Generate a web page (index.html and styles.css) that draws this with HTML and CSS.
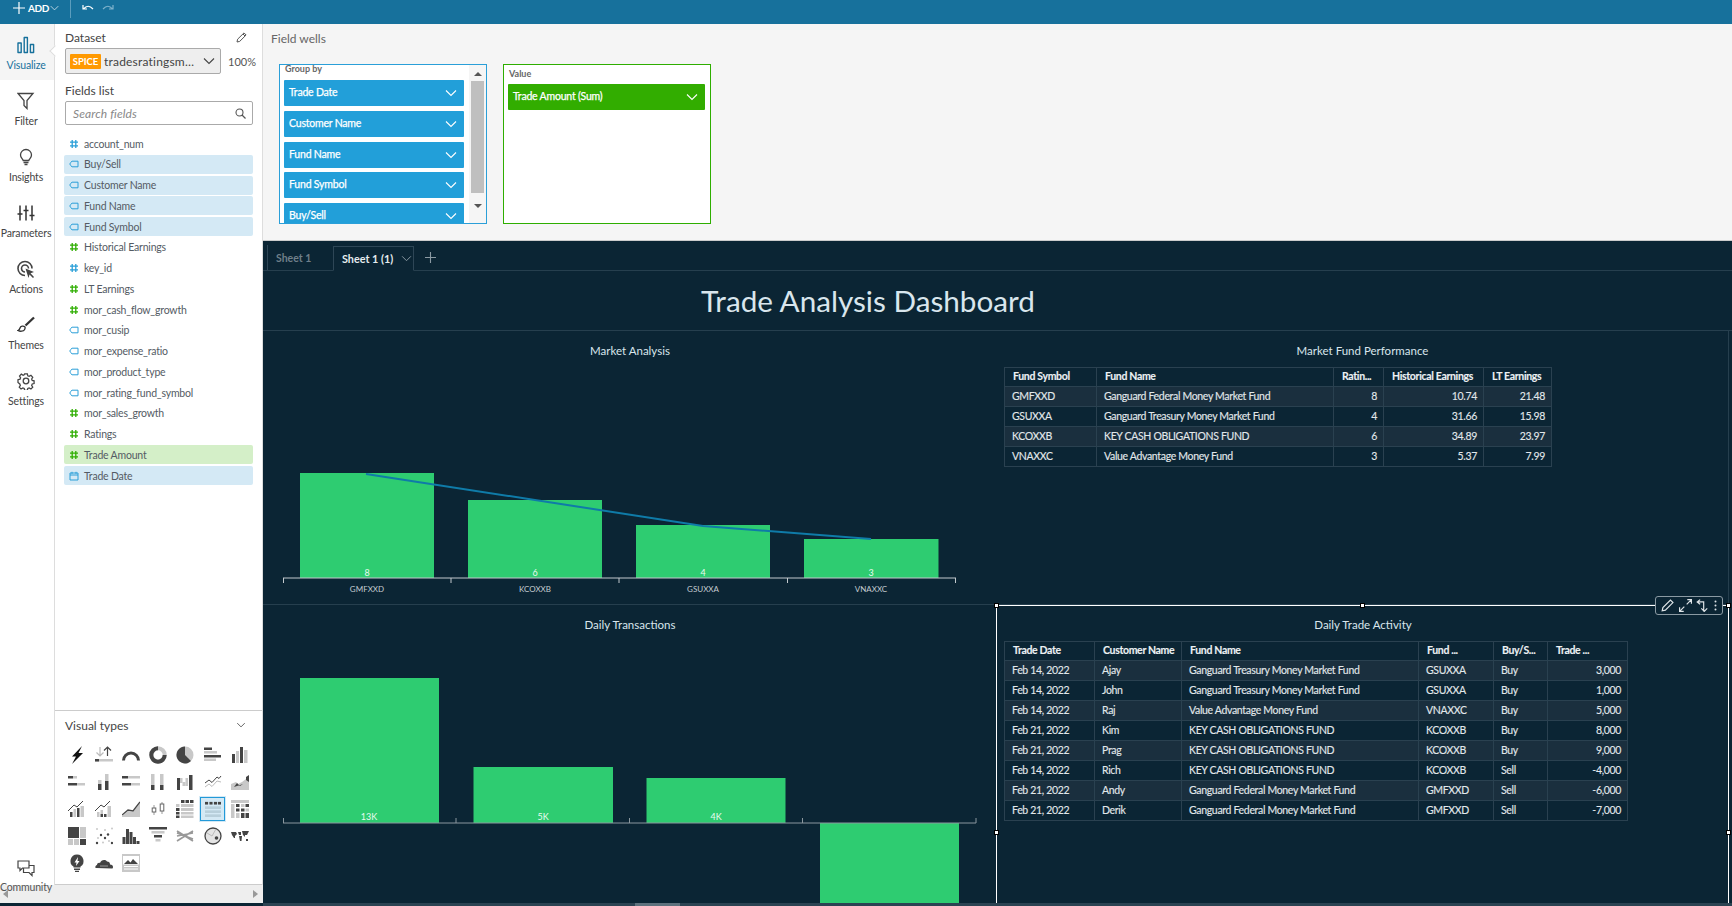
FILE: index.html
```html
<!DOCTYPE html>
<html lang="en">
<head>
<meta charset="utf-8">
<title>Trade Analysis Dashboard</title>
<link rel="stylesheet" href="styles.css">
</head>
<body>
<svg class="defs" width="0" height="0" aria-hidden="true">
  <symbol id="chev" viewBox="0 0 12 8"><path d="M1 1.5 6 6.5 11 1.5" fill="none" stroke="currentColor" stroke-width="1.1"/></symbol>
  <symbol id="hash" viewBox="0 0 10 10"><path d="M3.2 1v8M6.8 1v8M1 3.2h8M1 6.8h8" fill="none" stroke="currentColor" stroke-width="1.3"/></symbol>
  <symbol id="tag" viewBox="0 0 10 10"><path d="M3 2.2h6v5.6H3Q1.6 6.8.8 5 1.6 3.2 3 2.2z" fill="none" stroke="currentColor" stroke-width="1"/></symbol>
  <symbol id="cal" viewBox="0 0 10 10"><path d="M1 2h8v7H1zM1 4h8M3 .8v2M7 .8v2" fill="none" stroke="currentColor" stroke-width="1"/></symbol>
</svg>
<div class="app">
  <header class="topbar">
    <svg class="tb-plus" width="12" height="12" viewBox="0 0 12 12"><path d="M6 0v12M0 6h12" stroke="#fff" stroke-width="1.2"/></svg>
    <span class="tb-add">ADD</span>
    <svg class="tb-chev" width="9" height="6"><use href="#chev"/></svg>
    <span class="tb-sep"></span>
    <svg class="tb-undo" width="12" height="8" viewBox="0 0 12 8"><path d="M1 1v4h4M1.5 5Q6-.5 11 5" fill="none" stroke="#fff" stroke-width="1.2"/></svg>
    <svg class="tb-redo" width="12" height="8" viewBox="0 0 12 8"><path d="M11 1v4H7M10.5 5Q6-.5 1 5" fill="none" stroke="#7fb2cb" stroke-width="1.2"/></svg>
  </header>
  <div class="workspace">
    <div class="side">
      <div class="side-upper">
        <nav class="rail">
          <div class="rail-item active">
            <svg width="18" height="17" viewBox="0 0 18 17"><path d="M1 6.5h3.2v9.5H1zM7.2 1h3.2v15H7.2zM13.4 8h3.2v8h-3.2z" fill="none" stroke="#17719c" stroke-width="1.4" stroke-linejoin="round"/></svg>
            <span>Visualize</span><i class="notch"></i>
          </div>
          <div class="rail-item">
            <svg width="18" height="17" viewBox="0 0 18 17"><path d="M1 1h15l-6 7v8l-3-3V8z" fill="none" stroke="#444" stroke-width="1.3"/></svg>
            <span>Filter</span>
          </div>
          <div class="rail-item">
            <svg width="18" height="18" viewBox="0 0 18 18"><path d="M6.2 12.5C5.5 10.6 3.5 9.8 3.5 7a5.5 5.5 0 0 1 11 0c0 2.8-2 3.6-2.7 5.5zM6.5 14.5h5M7.5 16.5h3" fill="none" stroke="#444" stroke-width="1.3"/></svg>
            <span>Insights</span>
          </div>
          <div class="rail-item">
            <svg width="18" height="17" viewBox="0 0 18 17"><path d="M3 1v15M9 1v15M15 1v15M0.5 9.5h5M6.5 6h5M12.5 11h5" fill="none" stroke="#333" stroke-width="1.5"/></svg>
            <span>Parameters</span>
          </div>
          <div class="rail-item">
            <svg width="18" height="18" viewBox="0 0 18 18"><path d="M8 15.5A7 7 0 1 1 15 8.5M8 12a3.500 3.500 0 1 1 3.500-3.500" fill="none" stroke="#444" stroke-width="1.6"/><path d="M8.500 8.500 17 12l-3.500 1.200L17 17l-1 1-3.500-3.500L11.500 18z" fill="#444"/></svg>
            <span>Actions</span>
          </div>
          <div class="rail-item">
            <svg width="18" height="17" viewBox="0 0 18 17"><path d="M17 1 8.500 9" stroke="#333" stroke-width="2.400"/><path d="M8 10.500c-1.500-1.500-4.500-1-5 1-.4 1.500-1 2.200-2 2.500 2 1.200 5.500 1 6.500-.8.600-1 .8-1.900.500-2.700z" fill="none" stroke="#333" stroke-width="1.300"/></svg>
            <span>Themes</span>
          </div>
          <div class="rail-item">
            <svg width="18" height="18" viewBox="0 0 18 18"><circle cx="9" cy="9" r="2.800" fill="none" stroke="#444" stroke-width="1.300"/><path d="M7.500 1h3l.5 2.300 1.500.6 2-1.200 2 2.100-1.200 2 .6 1.500 2.100.5v3l-2.100.5-.6 1.500 1.200 2-2 2-2-1.200-1.500.6-.5 2.300h-3l-.5-2.300-1.500-.6-2 1.200-2-2 1.200-2-.6-1.500L.1 10.500v-3l2.300-.5.600-1.500-1.200-2 2-2.100 2 1.200 1.200-.6z" transform="translate(.9 .9) scale(.9)" fill="none" stroke="#444" stroke-width="1.400"/></svg>
            <span>Settings</span>
          </div>
          <div class="rail-item community">
            <svg width="18" height="16" viewBox="0 0 18 16"><path d="M6.500 5.500H17v7h-2v3l-3-3H6.500z" fill="#fff" stroke="#444" stroke-width="1.200"/><path d="M1 1h11v7H5.500L3 10.500V8H1z" fill="#fff" stroke="#444" stroke-width="1.200"/></svg>
            <span>Community</span>
          </div>
        </nav>
        <aside class="panel">
          <div class="ds-head"><span class="ds-label">Dataset</span>
            <svg width="11" height="11" viewBox="0 0 11 11"><path d="M1 10l.6-2.800L8 .9l2.100 2.100-6.400 6.400zM7 2l2 2" fill="none" stroke="#555" stroke-width="1"/></svg>
          </div>
          <div class="ds-row">
            <div class="ds-select">
              <span class="spice">SPICE</span><span class="ds-name">tradesratingsm…</span>
              <svg class="ds-chev" width="12" height="8"><use href="#chev"/></svg>
            </div>
            <span class="ds-pct">100%</span>
          </div>
          <div class="fl-label">Fields list</div>
          <div class="search"><span>Search fields</span>
            <svg width="11" height="11" viewBox="0 0 11 11"><circle cx="4.500" cy="4.500" r="3.500" fill="none" stroke="#555" stroke-width="1.100"/><path d="M7 7l3.500 3.500" stroke="#555" stroke-width="1.300"/></svg>
          </div>
          <ul class="fields">
            <li class="field"><svg class="fi blue"><use href="#hash"/></svg>account_num</li>
            <li class="field sel-b"><svg class="fi blue"><use href="#tag"/></svg>Buy/Sell</li>
            <li class="field sel-b"><svg class="fi blue"><use href="#tag"/></svg>Customer Name</li>
            <li class="field sel-b"><svg class="fi blue"><use href="#tag"/></svg>Fund Name</li>
            <li class="field sel-b"><svg class="fi blue"><use href="#tag"/></svg>Fund Symbol</li>
            <li class="field"><svg class="fi green"><use href="#hash"/></svg>Historical Earnings</li>
            <li class="field"><svg class="fi blue"><use href="#hash"/></svg>key_id</li>
            <li class="field"><svg class="fi green"><use href="#hash"/></svg>LT Earnings</li>
            <li class="field"><svg class="fi green"><use href="#hash"/></svg>mor_cash_flow_growth</li>
            <li class="field"><svg class="fi blue"><use href="#tag"/></svg>mor_cusip</li>
            <li class="field"><svg class="fi blue"><use href="#tag"/></svg>mor_expense_ratio</li>
            <li class="field"><svg class="fi blue"><use href="#tag"/></svg>mor_product_type</li>
            <li class="field"><svg class="fi blue"><use href="#tag"/></svg>mor_rating_fund_symbol</li>
            <li class="field"><svg class="fi green"><use href="#hash"/></svg>mor_sales_growth</li>
            <li class="field"><svg class="fi green"><use href="#hash"/></svg>Ratings</li>
            <li class="field sel-g"><svg class="fi green"><use href="#hash"/></svg>Trade Amount</li>
            <li class="field sel-b"><svg class="fi blue"><use href="#cal"/></svg>Trade Date</li>
          </ul>
          <section class="vt">
            <div class="vt-head"><span>Visual types</span><svg width="10" height="6"><use href="#chev"/></svg></div>
            <div class="vt-grid">
              <div class="vi"><svg viewBox="0 0 18 18"><path d="M14 0 4 10.500h4L4 18 15 7h-4.500z" fill="#111"/></svg></div>
              <div class="vi"><svg viewBox="0 0 18 18"><path d="M5 1v9M1.500 6.500 5 10l3.500-3.500" fill="none" stroke="#bbb" stroke-width="1.200"/><path d="M12.500 10V1M9 4.500 12.500 1 16 4.500" fill="none" stroke="#444" stroke-width="1.200"/><rect class="l" y="13" width="18" height="2.500"/><rect class="d" y="13" width="4" height="2.500"/></svg></div>
              <div class="vi"><svg viewBox="0 0 18 18"><path d="M1.500 14.500a7.500 7.500 0 0 1 15 0" fill="none" stroke="#444" stroke-width="3"/></svg></div>
              <div class="vi"><svg viewBox="0 0 18 18"><circle cx="9" cy="9" r="6.700" fill="none" stroke="#c8c8c8" stroke-width="4"/><path d="M9 2.300A6.700 6.700 0 1 0 15.700 9" fill="none" stroke="#444" stroke-width="4"/></svg></div>
              <div class="vi"><svg viewBox="0 0 18 18"><circle class="l" cx="9" cy="9" r="8.500"/><path class="d" d="M9 9V.5A8.500 8.500 0 1 0 15 15z"/></svg></div>
              <div class="vi"><svg viewBox="0 0 18 18"><rect class="d" y="1.500" width="8" height="2.500"/><rect class="l" y="5" width="13" height="2.500"/><rect class="d" y="9" width="17" height="2.500"/><rect class="l" y="12.500" width="12" height="2.500"/></svg></div>
              <div class="vi"><svg viewBox="0 0 18 18"><rect class="d" x="1" y="8" width="3" height="9"/><rect class="l" x="5" y="5" width="3" height="12"/><rect class="d" x="9" y="1" width="3" height="16"/><rect class="l" x="13" y="4" width="3.500" height="13"/></svg></div>

              <div class="vi"><svg viewBox="0 0 18 18"><rect class="d" y="3" width="5" height="2.500"/><rect class="l" x="5" y="3" width="4" height="2.500"/><rect class="d" y="10" width="9" height="2.500"/><rect class="l" x="9" y="10" width="8" height="2.500"/></svg></div>
              <div class="vi"><svg viewBox="0 0 18 18"><rect class="d" x="3" y="11" width="3.500" height="6"/><rect class="l" x="3" y="7" width="3.500" height="4"/><rect class="d" x="10" y="8" width="3.500" height="9"/><rect class="l" x="10" y="1" width="3.500" height="7"/></svg></div>
              <div class="vi"><svg viewBox="0 0 18 18"><rect class="d" y="3" width="6" height="2.500"/><rect class="l" x="6" y="3" width="12" height="2.500"/><rect class="d" y="10" width="9" height="2.500"/><rect class="l" x="9" y="10" width="9" height="2.500"/></svg></div>
              <div class="vi"><svg viewBox="0 0 18 18"><rect class="l" x="2" y="1" width="3.500" height="11"/><rect class="d" x="2" y="12" width="3.500" height="5"/><rect class="l" x="11" y="1" width="3.500" height="11"/><rect class="d" x="11" y="12" width="3.500" height="5"/></svg></div>
              <div class="vi"><svg viewBox="0 0 18 18"><rect class="d" x="1" y="5" width="3" height="12"/><rect class="l" x="4" y="5" width="2.500" height="5"/><rect class="l" x="6.500" y="9" width="3" height="4"/><rect class="l" x="9.500" y="5" width="2.500" height="8"/><rect class="d" x="13" y="2" width="3.500" height="15"/></svg></div>
              <div class="vi"><svg viewBox="0 0 18 18"><path d="M1 10l4-3 3 2.500L13 4l2 1.500L17 3" fill="none" stroke="#444" stroke-width="1"/><path d="M1 14l4-3 3 2.500L13 8l4 1" fill="none" stroke="#bbb" stroke-width="1"/></svg></div>
              <div class="vi"><svg viewBox="0 0 18 18"><path class="l" d="M0 17v-6l5-2 2 2 4-2 4-3 3 2v9z"/><path class="d" d="M3 14l3-4 3 3 3-2zM15 4l3-2v7l-3-2z"/></svg></div>

              <div class="vi"><svg viewBox="0 0 18 18"><rect class="d" x="2" y="12" width="2.500" height="5"/><rect class="l" x="5.500" y="9" width="2.500" height="8"/><rect class="d" x="9" y="8" width="2.500" height="9"/><rect class="l" x="12.500" y="6" width="3.500" height="11"/><path d="M0 11l6-6 3 2 6-6" fill="none" stroke="#444" stroke-width="1"/></svg></div>
              <div class="vi"><svg viewBox="0 0 18 18"><rect class="l" x="2" y="12" width="2.500" height="5"/><rect class="d" x="5.500" y="14" width="2.500" height="3"/><rect class="l" x="5.500" y="10" width="2.500" height="4"/><rect class="d" x="9" y="14" width="2.500" height="3"/><rect class="l" x="12.500" y="6" width="3.500" height="11"/><path d="M0 11l6-6 3 2 6-6" fill="none" stroke="#444" stroke-width="1"/></svg></div>
              <div class="vi"><svg viewBox="0 0 18 18"><path class="l" d="M0 16l6-5 5 1 7-9v14H0z"/><path d="M0 15l6-5 5 1 7-9" fill="none" stroke="#444" stroke-width="1.300"/></svg></div>
              <div class="vi"><svg viewBox="0 0 18 18"><path d="M5 5v10M13 2v12" stroke="#999" stroke-width="1"/><rect x="3.200" y="8" width="3.600" height="4" fill="#fff" stroke="#666"/><rect x="11.200" y="4" width="3.600" height="7" fill="#fff" stroke="#666"/></svg></div>
              <div class="vi"><svg viewBox="0 0 18 18"><rect class="d" x="5" y="0" width="3.500" height="3"/><rect class="d" x="9.500" y="0" width="3.500" height="3"/><rect class="d" x="14" y="0" width="3.500" height="3"/><rect class="l" x="0" y="4" width="3.500" height="3"/><rect class="l" x="5" y="4" width="12.500" height="3"/><rect class="d" x="0" y="8" width="3.500" height="3"/><rect class="l" x="5" y="8" width="12.500" height="3"/><rect class="d" x="0" y="12" width="3.500" height="2.500"/><rect class="l" x="5" y="12" width="12.500" height="2.500"/><rect class="d" x="0" y="15.500" width="3.500" height="2.500"/><rect class="l" x="5" y="15.500" width="12.500" height="2.500"/></svg></div>
              <div class="vi selected"><svg viewBox="0 0 18 18"><rect class="d" x="0" y="1" width="3.500" height="3"/><rect class="d" x="5" y="1" width="3.500" height="3"/><rect class="d" x="10" y="1" width="3.500" height="3"/><rect class="d" x="14.500" y="1" width="3.500" height="3"/><rect class="m" x="0" y="6" width="18" height="3"/><rect class="m" x="0" y="10.500" width="18" height="3"/><rect class="m" x="0" y="15" width="18" height="3"/></svg></div>
              <div class="vi"><svg viewBox="0 0 18 18"><rect class="l" x="0" y="0" width="18" height="3"/><rect class="l" x="0" y="4" width="3.500" height="14"/><rect class="d" x="5" y="4" width="3.500" height="3"/><rect class="l" x="10" y="4" width="3.500" height="3"/><rect class="d" x="14.500" y="4" width="3.500" height="3"/><rect class="d" x="5" y="8.500" width="3.500" height="3"/><rect class="d" x="10" y="8.500" width="3.500" height="3"/><rect class="l" x="14.500" y="8.500" width="3.500" height="3"/><rect class="l" x="5" y="13" width="3.500" height="5"/><rect class="d" x="10" y="13" width="3.500" height="5"/><rect class="d" x="14.500" y="13" width="3.500" height="5"/></svg></div>

              <div class="vi"><svg viewBox="0 0 18 18"><rect class="d" x="0" y="0" width="11" height="11"/><rect class="l" x="12" y="0" width="6" height="11"/><rect class="l" x="0" y="12" width="5" height="6"/><rect class="l" x="6" y="12" width="5" height="6"/><rect class="d" x="12" y="12" width="6" height="6"/></svg></div>
              <div class="vi"><svg viewBox="0 0 18 18"><g class="d"><circle cx="6" cy="8" r="1.200"/><circle cx="13" cy="7.500" r="1.200"/><circle cx="10" cy="11" r="1.200"/><circle cx="2" cy="16" r="1.200"/><circle cx="17" cy="16" r="1.200"/></g><g class="l"><circle cx="2" cy="2" r="1"/><circle cx="10" cy="3" r="1"/><circle cx="17" cy="1.500" r="1"/><circle cx="3" cy="11" r="1"/><circle cx="8" cy="15.500" r="1"/><circle cx="14" cy="14" r="1"/></g></svg></div>
              <div class="vi"><svg viewBox="0 0 18 18"><rect class="d" x="0.500" y="10" width="3" height="7"/><rect class="d" x="4" y="2" width="3" height="15"/><rect class="d" x="7.500" y="5" width="3" height="12"/><rect class="d" x="11" y="10" width="3" height="7"/><rect class="d" x="14.500" y="14" width="3" height="3"/></svg></div>
              <div class="vi"><svg viewBox="0 0 18 18"><rect class="d" x="0" y="0" width="18" height="2.500"/><rect class="l" x="2.500" y="4" width="13" height="2.500"/><rect class="d" x="5" y="8" width="8" height="2.500"/><rect class="l" x="6.500" y="12" width="5" height="2.500"/></svg></div>
              <div class="vi"><svg viewBox="0 0 18 18"><path d="M1 4l16 10M1 14l16-10M1 9l16-3M1 6l16 6" fill="none" stroke="#999" stroke-width="1.700"/></svg></div>
              <div class="vi"><svg viewBox="0 0 18 18"><circle cx="9" cy="9" r="8" fill="#e4e4e4" stroke="#444" stroke-width="1.300"/><circle cx="12.500" cy="11" r="1.800" fill="#444"/><path d="M3 6l5 3 4-7" fill="none" stroke="#bbb"/></svg></div>
              <div class="vi"><svg viewBox="0 0 18 18"><path class="d" d="M0 5h5l1 2-2 2v2H3L1 8zM7 5h3v3H8zM8 9h3l-.500 5H9zM11 4h7l-2 4h-2v2l-2-2zM15 12h2v2h-2z"/></svg></div>

              <div class="vi"><svg viewBox="0 0 18 18"><path class="d" d="M9 .5a6.500 6.500 0 0 1 3.500 12v1h-7v-1A6.500 6.500 0 0 1 9 .5zM6 14.500h6V16H6zM7 16.800h4V18H7z"/><path d="M10 3 6.500 8.500h2L8 12l3.500-5h-2z" fill="#fff"/></svg></div>
              <div class="vi"><svg viewBox="0 0 18 18"><path class="d" d="M1 14c-1 0-1-2.500 1-3 0-2 2-2.500 3-2 1-3 5-4 7-1.500 2 0 3 1 3 3 2 0 3 1 3 2.500s-.500 1.500-1 1.500z"/><path d="M5 12h8" stroke="#999"/></svg></div>
              <div class="vi"><svg viewBox="0 0 18 18"><rect class="l" width="18" height="18"/><rect x="1" y="2" width="16" height="8.500" fill="#fff"/><path class="d" d="M2 10l4-4 2.500 2.500L11 5l5 5z"/><path d="M2 12.500h14M2 15h14" stroke="#fff"/></svg></div>
            </div>
          </section>
        </aside>
      </div>
      <div class="hscroll"><i class="arr-l"></i><i class="arr-r"></i></div>
    </div>
    <main class="main">
      <section class="wells">
        <div class="wells-title">Field wells</div>
        <div class="wells-row">
          <div class="well well-b">
            <div class="well-body">
              <div class="well-label">Group by</div>
              <div class="chip">Trade Date<svg width="12" height="8"><use href="#chev"/></svg></div>
              <div class="chip">Customer Name<svg width="12" height="8"><use href="#chev"/></svg></div>
              <div class="chip">Fund Name<svg width="12" height="8"><use href="#chev"/></svg></div>
              <div class="chip">Fund Symbol<svg width="12" height="8"><use href="#chev"/></svg></div>
              <div class="chip">Buy/Sell<svg width="12" height="8"><use href="#chev"/></svg></div>
            </div>
            <div class="vscroll"><i class="up"></i><b></b><i class="down"></i></div>
          </div>
          <div class="well well-g">
            <div class="well-label val">Value</div>
            <div class="chip green-chip">Trade Amount (Sum)<svg width="12" height="8"><use href="#chev"/></svg></div>
          </div>
        </div>
      </section>
      <section class="sheet">
        <div class="tabs">
          <span class="tab">Sheet 1</span>
          <span class="tab current">Sheet 1 (1)<svg width="11" height="7"><use href="#chev"/></svg></span>
          <svg class="tab-plus" width="11" height="11" viewBox="0 0 11 11"><path d="M5.500 0v11M0 5.500h11" stroke="#8b9aa3" stroke-width="1.100"/></svg>
        </div>
        <h1 class="title">Trade Analysis Dashboard</h1>
        <div class="canvas">
          <article class="visual v-tl">
            <h2>Market Analysis</h2>
            <svg class="chart" viewBox="263 367 734 237" width="734" height="237">
              <g class="bars">
                <rect x="300" y="473" width="134" height="105"/><rect x="468" y="500" width="134" height="78"/><rect x="636" y="525" width="134" height="53"/><rect x="804" y="539" width="134.500" height="39"/>
              </g>
              <path class="trend" d="M366 474 535 500 703 526 871 539"/>
              <path class="axis" d="M283 578H956M283.500 578v5M451 578v5M619 578v5M787.500 578v5M955.500 578v5"/>
              <g class="val-labels"><text x="367" y="576">8</text><text x="535" y="576">6</text><text x="703" y="576">4</text><text x="871" y="576">3</text></g>
              <g class="ax-labels"><text x="367" y="592">GMFXXD</text><text x="535" y="592">KCOXXB</text><text x="703" y="592">GSUXXA</text><text x="871" y="592">VNAXXC</text></g>
            </svg>
          </article>
          <article class="visual v-tr">
            <h2>Market Fund Performance</h2>
            <table class="tbl t1">
              <colgroup><col class="c92"><col class="c237"><col class="c50"><col class="c100"><col class="c68"></colgroup>
              <thead><tr><th>Fund Symbol</th><th>Fund Name</th><th>Ratin...</th><th>Historical Earnings</th><th>LT Earnings</th></tr></thead>
              <tbody>
                <tr><td>GMFXXD</td><td>Ganguard Federal Money Market Fund</td><td class="n">8</td><td class="n">10.74</td><td class="n">21.48</td></tr>
                <tr><td>GSUXXA</td><td>Ganguard Treasury Money Market Fund</td><td class="n">4</td><td class="n">31.66</td><td class="n">15.98</td></tr>
                <tr><td>KCOXXB</td><td>KEY CASH OBLIGATIONS FUND</td><td class="n">6</td><td class="n">34.89</td><td class="n">23.97</td></tr>
                <tr><td>VNAXXC</td><td>Value Advantage Money Fund</td><td class="n">3</td><td class="n">5.37</td><td class="n">7.99</td></tr>
              </tbody>
            </table>
          </article>
          <article class="visual v-bl">
            <h2>Daily Transactions</h2>
            <svg class="chart" viewBox="263 641 734 262" width="734" height="262">
              <g class="bars">
                <rect x="300" y="678" width="139" height="145"/><rect x="473.500" y="767" width="139.500" height="56"/><rect x="646.500" y="778" width="139" height="45"/><rect x="820" y="823" width="139" height="80"/>
              </g>
              <path class="axis dim" d="M283 823H976M283.500 818v5M456 818v5M629.500 818v5M802.500 818v5M976 818v5"/>
              <g class="val-labels"><text x="369" y="820">13K</text><text x="543" y="820">5K</text><text x="716" y="820">4K</text></g>
            </svg>
          </article>
          <article class="visual v-br">
            <h2>Daily Trade Activity</h2>
            <table class="tbl t2">
              <colgroup><col class="c90"><col class="c87"><col class="c237"><col class="c75"><col class="c54"><col class="c80"></colgroup>
              <thead><tr><th>Trade Date</th><th>Customer Name</th><th>Fund Name</th><th>Fund ...</th><th>Buy/S...</th><th>Trade ...</th></tr></thead>
              <tbody>
                <tr><td>Feb 14, 2022</td><td>Ajay</td><td>Ganguard Treasury Money Market Fund</td><td>GSUXXA</td><td>Buy</td><td class="n">3,000</td></tr>
                <tr><td>Feb 14, 2022</td><td>John</td><td>Ganguard Treasury Money Market Fund</td><td>GSUXXA</td><td>Buy</td><td class="n">1,000</td></tr>
                <tr><td>Feb 14, 2022</td><td>Raj</td><td>Value Advantage Money Fund</td><td>VNAXXC</td><td>Buy</td><td class="n">5,000</td></tr>
                <tr><td>Feb 21, 2022</td><td>Kim</td><td>KEY CASH OBLIGATIONS FUND</td><td>KCOXXB</td><td>Buy</td><td class="n">8,000</td></tr>
                <tr><td>Feb 21, 2022</td><td>Prag</td><td>KEY CASH OBLIGATIONS FUND</td><td>KCOXXB</td><td>Buy</td><td class="n">9,000</td></tr>
                <tr><td>Feb 14, 2022</td><td>Rich</td><td>KEY CASH OBLIGATIONS FUND</td><td>KCOXXB</td><td>Sell</td><td class="n">-4,000</td></tr>
                <tr><td>Feb 21, 2022</td><td>Andy</td><td>Ganguard Federal Money Market Fund</td><td>GMFXXD</td><td>Sell</td><td class="n">-6,000</td></tr>
                <tr><td>Feb 21, 2022</td><td>Derik</td><td>Ganguard Federal Money Market Fund</td><td>GMFXXD</td><td>Sell</td><td class="n">-7,000</td></tr>
              </tbody>
            </table>
            <div class="selection">
              <i class="h h-tl"></i><i class="h h-tc"></i><i class="h h-tr"></i><i class="h h-ml"></i><i class="h h-mr"></i>
              <div class="vis-tools">
                <svg width="13" height="13" viewBox="0 0 11 11"><path d="M1 10l.6-2.800L8 .9l2.100 2.100-6.400 6.400z" fill="none" stroke="#dfe5e8" stroke-width="1"/></svg>
                <svg width="13" height="13" viewBox="0 0 11 11"><path d="M6.500 4.500 10.500.5M7 .5h3.500V4M4.500 6.500.5 10.500M.5 7v3.500H4" fill="none" stroke="#dfe5e8" stroke-width="1"/></svg>
                <svg width="13" height="13" viewBox="0 0 11 11"><path d="M3.500 4.500 1 2.500 3.500.5M1 2.500h5.500v8M4.500 8l2.500 2.500L9.500 8" fill="none" stroke="#dfe5e8" stroke-width="1"/></svg>
                <svg width="3" height="13" viewBox="0 0 3 11"><circle cx="1.500" cy="1.500" r="1" fill="#dfe5e8"/><circle cx="1.500" cy="5.500" r="1" fill="#dfe5e8"/><circle cx="1.500" cy="9.500" r="1" fill="#dfe5e8"/></svg>
              </div>
            </div>
          </article>
        </div>
        <div class="sheet-scroll"><b></b></div>
      </section>
    </main>
  </div>
</div>
</body>
</html>
```
FILE: styles.css
```css
* { box-sizing: border-box; }
html, body { margin: 0; height: 100%; overflow: hidden; }
body { font-family: "Lato", "Noto Sans", sans-serif; font-size: 11px; color: #444; background: #0b2534; }
.defs { position: absolute; }
i { display: block; font-style: normal; }

.app { display: flex; flex-direction: column; height: 906px; width: 1732px; }
.topbar { height: 24px; flex: none; background: #17719c; display: flex; align-items: flex-start; color: #fff; padding: 2px 0 0 13px; }
.tb-plus { flex: none; }
.tb-add { font-weight: 700; font-size: 10px; letter-spacing: -.4px; line-height: 12px; margin-left: 3px; width: 19px; white-space: nowrap; }
.tb-chev { margin: 3px 0 0 3px; color: #d7e7ef; flex: none; }
.tb-sep { width: 1px; height: 18px; margin: -2px 0 0 11px; background: #5b9dbd; flex: none; }
.tb-undo { margin: 2px 0 0 11px; flex: none; }
.tb-redo { margin: 2px 0 0 8px; flex: none; }

.workspace { flex: 1; display: flex; min-height: 0; }
.side { width: 263px; flex: none; display: flex; flex-direction: column; height: 879px; }
.side-upper { display: flex; height: 861px; background: #fff; }

.rail { width: 55px; flex: none; border-right: 1px solid #ddd; display: flex; flex-direction: column; background: #fff; }
.rail-item { height: 56px; display: flex; flex-direction: column; align-items: center; padding: 12px 2px 0 0; position: relative; flex: none; }
.rail-item svg { height: 18px; flex: none; }
.rail-item span { margin-top: 4px; font-size: 10.5px; letter-spacing: -.15px; line-height: 14px; color: #444; white-space: nowrap; }
.rail-item.active { background: #f5f5f5; }
.rail-item.active span { color: #17719c; }
.notch { position: absolute; right: -1px; top: 23px; width: 8px; height: 8px; background: #fff; transform: translateX(4px) rotate(45deg); border-left: 1px solid #ddd; border-bottom: 1px solid #ddd; }
.community { margin-top: auto; margin-bottom: -18px; height: 44px; padding-top: 0; z-index: 1; }
.community span { margin-top: 3px; color: #555; }

.panel { flex: 1; display: flex; flex-direction: column; padding: 0 9px; min-width: 0; border-right: 1px solid #ddd; }
.ds-head { height: 24px; display: flex; align-items: flex-end; justify-content: space-between; padding: 0 6px 2px 1px; }
.ds-head svg { margin-bottom: 3px; }
.ds-label { font-size: 12px; line-height: 17px; color: #444; }
.ds-row { display: flex; align-items: center; height: 26px; margin-left: 1px; }
.ds-select { width: 156px; height: 26px; flex: none; background: #eee; border: 1px solid #aaa; border-radius: 2px; display: flex; align-items: center; padding-left: 4px; position: relative; }
.spice { background: #f90; color: #fff; font-size: 9.5px; font-weight: 700; width: 31px; height: 15px; line-height: 15px; text-align: center; border-radius: 1px; flex: none; }
.ds-name { font-size: 12px; margin-left: 3px; color: #444; white-space: nowrap; letter-spacing: .2px; }
.ds-chev { margin-left: auto; margin-right: 5px; color: #444; }
.ds-pct { margin-left: 7px; font-size: 11px; color: #555; }
.fl-label { font-size: 12px; line-height: 16px; margin: 9px 0 2px 1px; color: #444; }
.search { width: 188px; height: 24px; margin-left: 1px; border: 1px solid #aaa; border-radius: 2px; display: flex; align-items: center; justify-content: space-between; padding: 0 6px 0 7px; background: #fff; font-style: italic; font-size: 12px; letter-spacing: .1px; color: #888; flex: none; }
.fields { list-style: none; margin: 9px 0 0; padding: 0; flex: 1; display: flex; flex-direction: column; gap: 1.75px; }
.field { height: 19px; display: flex; align-items: center; width: 189px; padding-left: 5px; border-radius: 2px; font-size: 10.5px; letter-spacing: -.2px; color: #545b64; white-space: nowrap; flex: none; }
.fi { width: 10px; height: 10px; margin-right: 5px; flex: none; }
.blue { color: #2a9fd8; }
.green { color: #2eae00; }
.sel-b { background: #d4e9f5; }
.sel-g { background: #d4efc8; }

.vt { margin: 0 -9px; height: 175px; border-top: 1px solid #ccc; padding: 6px 0 0 9px; flex: none; border-bottom: 1px solid #ccc; }
.vt-head { display: flex; justify-content: space-between; align-items: center; width: 182px; padding-left: 1px; font-size: 12px; color: #444; height: 16px; }
.vt-head svg { color: #444; }
.vt-grid { display: grid; grid-template-columns: repeat(7, 27.2px); grid-auto-rows: 26.8px; margin: 9px 0 0 -1px; }
.vi { display: flex; align-items: center; justify-content: center; }
.vi svg { width: 18px; height: 18px; }
.vi.selected svg { width: 16px; height: 16px; }
.vi.selected { outline: 1px solid #2299d8; outline-offset: -2px; background: #d4e9f5; padding: 3px; }
.d { fill: #444; }
.l { fill: #c8c8c8; }
.m { fill: #b8cfdb; }

.hscroll { height: 18px; flex: none; background: #eee; display: flex; align-items: center; justify-content: space-between; padding: 0 5px 0 3px; }
.arr-l { border: 4px solid transparent; border-right: 5px solid #999; border-left: 0; }
.arr-r { border: 4px solid transparent; border-left: 5px solid #999; border-right: 0; }

.main { flex: 1; display: flex; flex-direction: column; min-width: 0; height: 882px; overflow: hidden; }
.wells { height: 217px; flex: none; background: #f5f5f5; border-bottom: 1px solid #ccc; padding: 7px 0 0 8px; }
.wells-title { font-size: 12px; line-height: 16px; color: #666; }
.wells-row { display: flex; gap: 16px; margin: 17px 0 0 8px; }
.well { width: 208px; height: 160px; background: #fff; border: 1px solid #2a9fd8; display: flex; overflow: hidden; }
.well-g { border-color: #2eae00; display: block; padding-left: 4px; }
.well-body { width: 186px; padding-left: 4px; flex: none; }
.well-label { font-size: 9px; font-weight: 700; line-height: 8px; color: #666; height: 15px; padding: 0 0 0 1px; }
.well-label.val { height: 19px; padding-top: 4px; line-height: 9px; }
.chip { width: 180px; height: 26px; margin-bottom: 4.75px; background: #229fd9; color: #fff; border-radius: 1px; display: flex; justify-content: space-between; align-items: center; padding: 0 7px 2px 5px; font-size: 10.5px; letter-spacing: -.2px; font-weight: 400; -webkit-text-stroke: .25px #fff; white-space: nowrap; }
.chip svg { margin-top: 2px; }
.green-chip { width: 197px; background: #32ad00; }
.vscroll { width: 17px; margin-left: 3px; background: #f5f5f5; display: flex; flex-direction: column; align-items: center; padding-top: 7px; }
.vscroll b { width: 13px; height: 112px; background: #bfbfbf; margin: 5px 0 11px; }
.up { border: 4px solid transparent; border-bottom: 4px solid #555; border-top: 0; }
.down { border: 4px solid transparent; border-top: 4px solid #555; border-bottom: 0; }

.sheet { flex: 1; display: flex; flex-direction: column; background: #0b2534; min-height: 0; position: relative; }
.tabs { height: 30px; flex: none; border-bottom: 1px solid #263f4e; display: flex; align-items: flex-end; padding-left: 1px; font-weight: 700; font-size: 10.5px; position: relative; }
.tab { height: 25px; line-height: 26px; margin-left: 3px; border-left: 1px solid #2e4656; padding: 0 0 0 8px; color: #6f7f89; width: 66px; }
.tab.current { width: 81px; margin-left: 0; color: #e6ecef; border: 1px solid #2e4656; border-bottom: 1px solid #0b2534; margin-bottom: -1px; padding: 0 1px 0 8px; display: flex; align-items: center; justify-content: space-between; white-space: nowrap; font-size: 10.8px; }
.tab.current svg { color: #8b9aa3; }
.tab-plus { margin: 0 0 7px 11px; }
.title { margin: 0; height: 59px; padding: 11px 259px 0 0; text-align: center; font-size: 29.7px; line-height: 38px; font-weight: 400; color: #d9e6ed; flex: none; }
.canvas { flex: 1; display: grid; grid-template-columns: 734px 1fr; grid-template-rows: 274px 1fr; border-top: 1px solid #263f4e; min-height: 0; position: relative; }
.visual { position: relative; min-width: 0; }
.v-tl, .v-tr { border-bottom: 1px solid #263f4e; }
.v-tr { margin-right: 3px; border-right: 1px solid #263f4e; }
.v-br { padding-right: 3px; }
.visual h2 { margin: 0; text-align: center; font-size: 11.5px; font-weight: 400; line-height: 16px; color: #d9e6ed; height: 36px; padding-top: 12px; }
.chart { display: block; }
.bars rect { fill: #2ecc71; }
.trend { fill: none; stroke: #0f7ba8; stroke-width: 2; }
.axis { fill: none; stroke: #c3c9cd; stroke-width: 1; }
.axis.dim { stroke: #8b979e; stroke-width: 1; }
.val-labels text { font-size: 9px; fill: #e9fbf0; text-anchor: middle; }
.ax-labels text { font-size: 8px; fill: #c5ccd1; text-anchor: middle; }

.tbl { border-collapse: collapse; table-layout: fixed; margin-left: 7px; font-size: 10.5px; letter-spacing: -.33px; color: #e2e8eb; -webkit-text-stroke: .12px #e2e8eb; }
.t1 { width: 547px; }
.t2 { width: 623px; }
.c92 { width: 92px; } .c237 { width: 237px; } .c50 { width: 50px; } .c100 { width: 100px; } .c68 { width: 68px; }
.c90 { width: 90px; } .c87 { width: 87px; } .c75 { width: 75px; } .c54 { width: 54px; } .c80 { width: 80px; }
.tbl th, .tbl td { border: 1px solid #2a4150; padding: 0 7px 2px; white-space: nowrap; overflow: hidden; text-align: left; }
.tbl th { height: 19px; font-weight: 700; color: #eef2f4; padding-left: 8px; }
.tbl td { height: 20px; }
.tbl tbody tr:nth-child(odd) td { background: #1a2f3e; }
.tbl td.n { text-align: right; padding-right: 6px; }

.selection { position: absolute; left: -1px; top: 0; right: 3px; bottom: -10px; border: 1px solid #fff; border-width: 1.5px 1.5px 0 1.5px; }
.h { position: absolute; width: 5px; height: 5px; background: #fff; border: 1px solid #000; }
.h-tl { left: -3px; top: -3px; }
.h-tc { left: calc(50% - 3px); top: -3px; }
.h-tr { right: -3px; top: -3px; }
.h-ml { left: -3px; top: 224px; }
.h-mr { right: -3px; top: 224px; }
.vis-tools { position: absolute; right: 5px; top: -10px; width: 68px; height: 19px; background: #0b2534; border: 1px solid #8b9aa3; border-radius: 3px; display: flex; align-items: center; justify-content: space-around; padding: 0 3px; }

.sheet-scroll { position: absolute; left: 0; right: 0; bottom: 0; height: 3px; background: #2b4352; }
.sheet-scroll b { display: block; width: 45px; height: 3px; margin-left: 372px; background: #5d717d; }
```
